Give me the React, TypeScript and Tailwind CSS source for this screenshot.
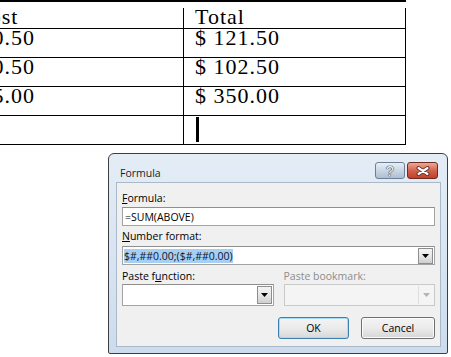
import React from "react";

function Tri({ color = "#000" }: { color?: string }) {
  return (
    <svg width="7" height="4" viewBox="0 0 7 4">
      <path d="M0 0 H7 L3.5 4 Z" fill={color} />
    </svg>
  );
}

function DropBtn({ h }: { h: string }) {
  return (
    <div
      className={`${h} w-[15px] mr-[1px] ml-auto flex items-center justify-center border border-[#8e8e8e] bg-linear-to-b from-[#f4f4f4] via-[#e6e6e6] to-[#cfcfcf]`}
    >
      <Tri />
    </div>
  );
}

export default function App() {
  const rows = [
    { a: "Cost", b: "Total" },
    { a: "$ 0.50", b: "$ 121.50" },
    { a: "$ 0.50", b: "$ 102.50" },
    { a: "$ 5.00", b: "$ 350.00" },
    { a: "", b: "" },
  ];
  return (
    <div className="relative w-[451px] h-[357px] overflow-hidden bg-white">
      {/* Word table */}
      <div className="ml-[-38px] w-[444px] border-t-2 border-black flex flex-col text-[22px] tracking-[1px] leading-[18px] text-black font-['Liberation_Serif',serif]">
        {rows.map((r, i) => (
          <div
            key={i}
            className={`flex border-b border-black ${i === 0 ? "h-[27px] pt-[6px]" : "h-[29px]"}`}
          >
            <div className="w-[221px] h-full border-l border-black pl-[11px] whitespace-nowrap">
              {r.a}
            </div>
            <div className="flex-1 h-full border-l border-r border-black pl-[11px] whitespace-nowrap">
              {i === 4 ? <div className="w-[3px] h-[25px] bg-black mt-[1px] ml-[1px]" /> : r.b}
            </div>
          </div>
        ))}
      </div>

      {/* Formula dialog */}
      <div className="absolute left-[108px] top-[153px] w-[340px] h-[201px] rounded-t-[6px] rounded-b-[2px] border border-[#3b3f44] bg-linear-to-b from-[#e4edf6] to-[#cddcec] flex flex-col text-[10.5px] leading-[14px] text-black font-['Open_Sans','Noto_Sans',sans-serif]">
        {/* title bar */}
        <div className="h-[28px] flex items-start">
          <div className="mt-[12px] ml-[11px] text-[#1b1b1b]">Formula</div>
          <div className="ml-auto mr-[9px] mt-[8px] flex gap-[2px]">
            <div className="w-[30px] h-[17px] rounded-[3px] border border-[#6f7f93] bg-linear-to-b from-[#e8eef6] via-[#c9d6e4] to-[#aebfd3] flex items-center justify-center text-[14px] leading-[14px] text-[#f4f6f9] font-['Liberation_Sans',sans-serif] [text-shadow:0_0_1px_#33445a,0_0_1px_#33445a,0_0_1px_#33445a]">
              ?
            </div>
            <div className="w-[31px] h-[17px] rounded-[3px] border border-[#6e2b20] bg-linear-to-b from-[#eaa999] via-[#d3624d] to-[#c0402a] flex items-center justify-center">
              <svg width="14" height="10" viewBox="0 0 14 10">
                <path d="M2.5 2 L11.5 8 M11.5 2 L2.5 8" stroke="#4a1a12" strokeWidth="3.8" strokeLinecap="round" />
                <path d="M2.5 2 L11.5 8 M11.5 2 L2.5 8" stroke="#ffffff" strokeWidth="2.2" strokeLinecap="round" />
              </svg>
            </div>
          </div>
        </div>

        {/* client area */}
        <div className="ml-[7px] mr-[6px] border border-[#a9b9ca] bg-[#f0f0f0] pl-[5px] pr-[5px] pt-[8px] pb-[7px] flex flex-col">
          <div className="h-[14px]">
            <span className="underline">F</span>ormula:
          </div>
          <div className="mt-[2px] h-[19px] border border-[#a3a3a3] border-t-[#8f8f8f] bg-white flex items-center pl-[2px]">
            =SUM(ABOVE)
          </div>

          <div className="mt-[3px] h-[14px]">
            <span className="underline">N</span>umber format:
          </div>
          <div className="mt-[3px] h-[19px] border border-[#a3a3a3] border-t-[#8f8f8f] bg-white flex items-center">
            <span className="ml-[1px] h-[14px] bg-[#a7cff3] text-[#0b1530] whitespace-nowrap">
              $#,##0.00;($#,##0.00)
            </span>
            <DropBtn h="h-[16px]" />
          </div>

          <div className="mt-[4px] flex gap-[10px]">
            <div className="flex-1 flex flex-col">
              <div className="h-[14px]">
                Paste f<span className="underline">u</span>nction:
              </div>
              <div className="mt-[1px] h-[22px] border border-[#a3a3a3] border-t-[#8f8f8f] bg-white flex items-center">
                <DropBtn h="h-[18px]" />
              </div>
            </div>
            <div className="flex-1 flex flex-col">
              <div className="h-[14px] text-[#8d8d8d]">Paste bookmark:</div>
              <div className="mt-[1px] h-[22px] border border-[#c9c9c9] bg-[#f4f4f4] flex items-center">
                <div className="ml-auto mr-[1px] w-[15px] h-[18px] border-l border-[#dedede] flex items-center justify-center">
                  <Tri color="#b3b3b3" />
                </div>
              </div>
            </div>
          </div>

          <div className="mt-[11px] flex justify-end gap-[12px]">
            <div className="w-[71px] h-[22px] rounded-[3px] border border-[#3c7fb1] bg-linear-to-b from-[#f4f4f4] via-[#ebebeb] to-[#d8d8d8] shadow-[inset_0_0_0_1px_#a8dcf6] flex items-center justify-center">
              OK
            </div>
            <div className="w-[74px] h-[22px] rounded-[3px] border border-[#707070] bg-linear-to-b from-[#f4f4f4] via-[#ebebeb] to-[#d6d6d6] shadow-[inset_0_0_0_1px_#fbfbfb] flex items-center justify-center">
              Cancel
            </div>
          </div>
        </div>
      </div>
    </div>
  );
}
